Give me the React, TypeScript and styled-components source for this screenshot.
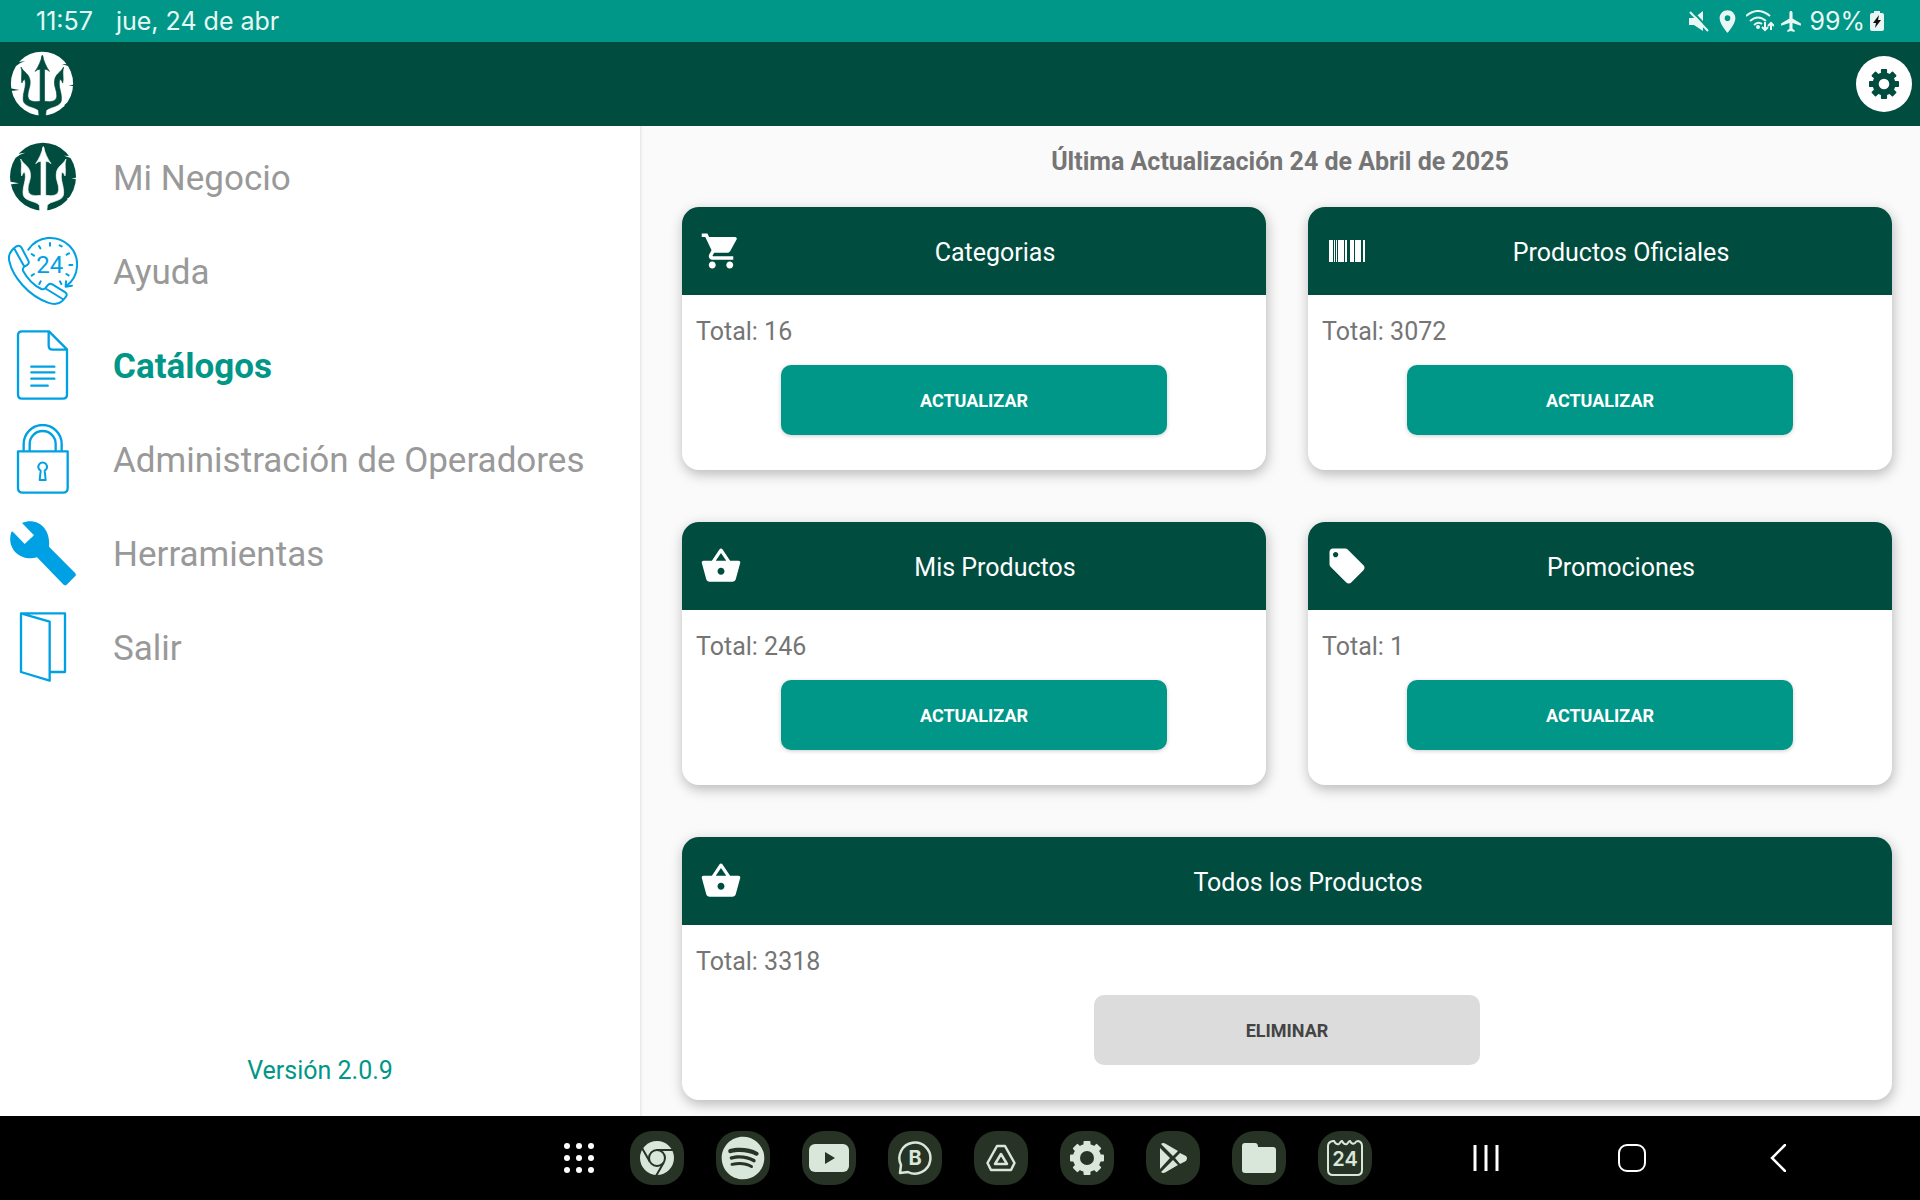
import React from 'react';
import styled, { createGlobalStyle } from 'styled-components';
import { MdShoppingCart, MdShoppingBasket, MdLocalOffer, MdLocationOn, MdFlight } from 'react-icons/md';
import { FaSpotify } from 'react-icons/fa6';

const color = {
  teal: '#009788',
  dark: '#004d40',
  sky: '#00a1e4',
  menu: '#999999',
  text: '#757575',
  tile: '#263325',
  glyph: '#d9e6da',
  status: '#e9f7f4',
};

const GlobalStyle = createGlobalStyle`
  *, *::before, *::after { box-sizing: border-box; }
  body { margin: 0; font-family: Roboto, "Liberation Sans", sans-serif; }
  button { font-family: inherit; border: 0; padding: 0; cursor: pointer; }
  h1, h2, p, ul { margin: 0; padding: 0; }
  svg { display: block; flex: none; }
`;

const Page = styled.div`
  min-height: 100vh;
  display: flex;
  flex-direction: column;
`;

const StatusBar = styled.div`
  height: 42px;
  padding: 0 36px;
  display: flex;
  align-items: center;
  justify-content: space-between;
  background: ${color.teal};
  color: ${color.status};
  font: 400 25px/42px Inter, Roboto, sans-serif;
`;

const StatusGroup = styled.div<{ $gap: number }>`
  display: flex;
  align-items: center;
  gap: ${(p) => p.$gap}px;
`;

const AppBar = styled.header`
  height: 84px;
  padding: 0 8px 0 9px;
  display: flex;
  align-items: center;
  justify-content: space-between;
  background: ${color.dark};
`;

const RoundButton = styled.button`
  width: 56px;
  height: 56px;
  border-radius: 50%;
  display: grid;
  place-items: center;
  background: #fff;
  color: ${color.dark};
`;

const Body = styled.div`
  flex: 1;
  display: grid;
  grid-template-columns: 1fr 2fr;
`;

const Sidebar = styled.nav`
  display: flex;
  flex-direction: column;
  padding: 4px 0 30px;
  background: #fff;
`;

const MenuList = styled.ul`
  list-style: none;
`;

const MenuLink = styled.a<{ $active?: boolean }>`
  height: 94px;
  padding-left: 8px;
  display: flex;
  align-items: center;
  gap: 35px;
  font-size: 35px;
  line-height: 42px;
  font-weight: ${(p) => (p.$active ? 700 : 400)};
  color: ${(p) => (p.$active ? color.teal : color.menu)};
  text-decoration: none;
`;

const MenuLabel = styled.span`
  padding-top: 4px;
`;

const Version = styled.p`
  margin-top: auto;
  text-align: center;
  font-size: 25px;
  line-height: 30px;
  color: ${color.teal};
`;

const Main = styled.main`
  padding: 21px 0 16px;
  background: #fafafa;
  box-shadow: inset 3px 0 3px -2px rgba(0, 0, 0, 0.1);
`;

const Updated = styled.h1`
  text-align: center;
  font-size: 25px;
  line-height: 30px;
  font-weight: 700;
  color: ${color.text};
`;

const Cards = styled.div`
  margin-top: 30px;
  padding: 0 28px 0 42px;
  display: grid;
  grid-template-columns: 1fr 1fr;
  gap: 52px 42px;
`;

const CardBox = styled.section<{ $wide?: boolean }>`
  grid-column: ${(p) => (p.$wide ? '1 / -1' : 'auto')};
  border-radius: 17px;
  overflow: hidden;
  background: #fff;
  box-shadow: 1px 4px 13px rgba(0, 0, 0, 0.27);
`;

const CardHead = styled.div`
  height: 88px;
  padding: 0 18px;
  display: flex;
  align-items: center;
  background: ${color.dark};
  color: #fff;
`;

const CardTitle = styled.h2`
  flex: 1;
  padding-top: 4px;
  text-align: center;
  font-size: 25px;
  line-height: 30px;
  font-weight: 400;
`;

const CardBody = styled.div`
  padding: 22px 14px 35px;
  display: flex;
  flex-direction: column;
  align-items: center;
  gap: 18px;
`;

const Total = styled.p`
  align-self: stretch;
  font-size: 25px;
  line-height: 30px;
  color: ${color.text};
`;

const Action = styled.button<{ $muted?: boolean }>`
  width: 386px;
  max-width: 100%;
  height: 70px;
  border-radius: 10px;
  font-size: 18px;
  font-weight: 700;
  background: ${(p) => (p.$muted ? '#dcdcdc' : color.teal)};
  color: ${(p) => (p.$muted ? '#444' : '#fff')};
  box-shadow: ${(p) => (p.$muted ? 'none' : '0 1px 4px rgba(0, 0, 0, 0.2)')};
`;

const NavBar = styled.footer`
  height: 84px;
  padding-right: 69px;
  display: flex;
  align-items: center;
  justify-content: flex-end;
  background: #000;
  color: #fff;
`;

const Dock = styled.div`
  display: flex;
  gap: 32px;
  margin: 0 41px 0 37px;
`;

const BareButton = styled.button<{ $width: number }>`
  width: ${(p) => p.$width}px;
  height: 54px;
  display: grid;
  place-items: center;
  background: none;
  color: #fff;
`;

const Tile = styled.button`
  width: 54px;
  height: 54px;
  border-radius: 22px;
  display: grid;
  place-items: center;
  background: ${color.tile};
  color: ${color.glyph};
`;

function Trident({ size, fill, ground }: { size: number; fill: string; ground: string }) {
  const half =
    'M132 54 L130 50 C125 68 118 86 107 101 Q114 94 123 94 L123 196 Q85 202 84 180 C83 160 94 150 91 130 C88 108 73 106 62 87 C68 106 61 120 65 138 Q68 128 74 126 C82 150 65 170 70 196 C74 214 112 214 118 226 L120 248 L132 248 Z';
  return (
    <svg width={size} height={size} viewBox="24 36 210 210" aria-hidden="true">
      <ellipse cx="129" cy="140" rx="99" ry="102" fill={fill} />
      <g fill={ground}>
        <path d={half} stroke={ground} strokeWidth="2" />
        <path d={half} stroke={ground} strokeWidth="2" transform="matrix(-1 0 0 1 260 0)" />
        <path d="M24 154 L57 160 L24 164 Z M50 72 L76 68 L60 74 L46 84 Z M192 77 L216 78 L212 84 Z M240 142 L214 145 L240 150 Z M218 198 L200 206 L214 210 Z" />
      </g>
    </svg>
  );
}

function Line({ box, children, width = 7 }: { box: string; children: React.ReactNode; width?: number }) {
  return (
    <svg width="70" height="70" viewBox={box} fill="none" stroke={color.sky} strokeWidth={width} strokeLinecap="round" strokeLinejoin="round" aria-hidden="true">
      {children}
    </svg>
  );
}

const HelpIcon = () => (
  <Line box="24 318 210 210" width={6}>
    <path d="M85 359 A80 80 0 1 1 199 468 M198 454 L197 470 L216 467" />
    <path d="M150 339 V347 M179 346 L185 349 M200 374 L207 370 M208 405 H217 M199 432 L206 436 M180 454 L184 462 M122 454 L118 462 M102 432 L95 437 M102 377 L95 372 M121 355 L117 348" />
    <path d="M49 349 C30 362 24 378 28 394 C38 440 84 496 144 518 C164 525 178 522 188 512 L198 500 Q203 492 196 487 L157 463 Q149 458 142 467 Q134 480 124 477 C102 466 82 446 69 422 Q66 414 76 408 Q90 402 85 392 L64 352 Q58 344 49 349 Z M44 358 L72 408 M139 477 L188 507" />
    <text x="149" y="428" textAnchor="middle" fontFamily="Roboto, sans-serif" fontSize="72" fontWeight="400" fill={color.sky} stroke="none">24</text>
  </Line>
);

const DocIcon = () => (
  <Line box="24 600 210 210">
    <path d="M66 604 H147 L201 658 V793 Q201 806 189 806 H66 Q54 806 54 793 V616 Q54 604 66 604 Z M146 605 V646 Q146 659 158 659 H200 M94 710 H163 M94 727 H163 M94 746 H163 M94 767 H143" />
  </Line>
);

const LockIcon = () => (
  <Line box="24 42 210 210">
    <path d="M54 124 H203 V234 Q203 248 189 248 H68 Q54 248 54 234 Z" />
    <path d="M71 122 V102 A57 57 0 0 1 185 102 V122 M89 122 V102 A39 39 0 0 1 167 102 V122" />
    <path d="M122 182 A13 13 0 1 1 134 182 L137 210 H119 Z" strokeWidth="6" />
  </Line>
);

const WrenchIcon = () => (
  <svg width="70" height="70" viewBox="24 324 210 210" fill={color.sky} aria-hidden="true">
    <path d="M66 339 C108 321 153 352 147 410 L226 490 Q229 494 226 498 L200 524 Q196 528 191 524 L111 442 C60 456 18 414 34 366 Q36 363 40 367 L74 402 L102 376 Z" />
  </svg>
);

const DoorIcon = () => (
  <Line box="24 606 210 210">
    <path d="M63 610 H195 V786 H151 M63 610 L149 635 V812 L63 786 Z" />
  </Line>
);

const BarcodeIcon = () => (
  <svg width="42" height="42" viewBox="0 0 42 42" fill="currentColor" aria-hidden="true">
    <path d="M3 10h4v22H3z M8 10h1v22H8z M10 10h1v22h-1z M12 10h6v22h-6z M19 10h2v22h-2z M24 10h4v22h-4z M29 10h6v22h-6z M37 10h2v22h-2z" />
  </svg>
);

function Gear({ size, body, hole, tooth, fill, ground }: { size: number; body: number; hole: number; tooth: number; fill: string; ground: string }) {
  return (
    <svg width={size} height={size} viewBox="-17 -17 34 34" fill={fill} aria-hidden="true">
      <circle r={body} />
      {[0, 45, 90, 135].map((a) => (
        <rect key={a} x={-tooth / 2} y={-17} width={tooth} height={34} rx={1} transform={`rotate(${a})`} />
      ))}
      <circle r={hole} fill={ground} />
    </svg>
  );
}

const MuteIcon = () => (
  <svg width="20" height="22" viewBox="0 0 20 22" aria-hidden="true">
    <path d="M0 8 H5 L14 1 V21 L5 15 H0 Z" fill={color.status} />
    <path d="M3 1 L20 19" stroke={color.teal} strokeWidth="2" />
    <path d="M1 2 L19 21" stroke={color.status} strokeWidth="2" />
  </svg>
);

const WifiIcon = () => (
  <svg width="28" height="22" viewBox="0 0 28 22" fill="none" stroke={color.status} strokeWidth="2" aria-hidden="true">
    <path d="M0 6 Q12 -4 24 6 M4 11 Q12 4 20 11 M8 15 Q12 11 16 14" />
    <circle cx="12" cy="17" r="1" fill={color.status} />
    <path d="M19 12 V20 M16 17 L19 20 L22 17 M25 20 V13 M22 16 L25 13 L28 16" strokeWidth="2" />
  </svg>
);

const BatteryIcon = () => (
  <svg width="14" height="20" viewBox="0 0 14 20" aria-hidden="true">
    <path d="M4 0 H10 V2 H12 Q14 2 14 4 V18 Q14 20 12 20 H2 Q0 20 0 18 V4 Q0 2 2 2 H4 Z" fill={color.status} />
    <path d="M9 4 L3 12 H6 L5 17 L11 9 H8 Z" fill="#111" />
  </svg>
);

const ChromeIcon = () => (
  <svg width="34" height="34" viewBox="0 0 34 34" aria-hidden="true">
    <circle cx="17" cy="17" r="17" fill={color.glyph} />
    <g stroke={color.tile} strokeWidth="2" fill="none">
      <path d="M17 9 H33 M10 21 L2 7 M24 21 L16 35" />
      <circle cx="17" cy="17" r="8" fill={color.glyph} />
    </g>
  </svg>
);

const YoutubeIcon = () => (
  <svg width="40" height="28" viewBox="0 0 40 28" aria-hidden="true">
    <rect width="40" height="28" rx="6" fill={color.glyph} />
    <path d="M16 8 L26 14 L16 20 Z" fill={color.tile} />
  </svg>
);

const BusinessIcon = () => (
  <svg width="34" height="34" viewBox="0 0 34 34" aria-hidden="true">
    <path d="M3 24 A15.500 15.500 0 1 1 10 31 L2 32 Z" fill="none" stroke={color.glyph} strokeWidth="2.500" strokeLinejoin="round" />
    <text x="17" y="24" textAnchor="middle" fontFamily="Inter, sans-serif" fontSize="20" fontWeight="700" fill={color.glyph}>B</text>
  </svg>
);

const DriveIcon = () => (
  <svg width="30" height="28" viewBox="0 0 30 28" fill="none" stroke={color.glyph} strokeWidth="2.500" strokeLinejoin="round" aria-hidden="true">
    <path d="M11 2 H19 L28.500 19 L25 26 H5 L1.500 19 Z M15 10 L21 20 H9 Z" />
  </svg>
);

const PlayIcon = () => (
  <svg width="30" height="32" viewBox="0 0 30 32" fill={color.glyph} aria-hidden="true">
    <path d="M2 6 L12 16 L2 27 Z M3 2 Q5 0 8 2 L20 9 L15 14 Z M3 30 Q5 32 8 30 L20 23 L15 18 Z M17 16 L22 11 L28 14 Q30 16 28 19 L22 22 Z" />
  </svg>
);

const FolderIcon = () => (
  <svg width="34" height="32" viewBox="0 0 34 32" fill={color.glyph} aria-hidden="true">
    <path d="M3 1 H13 Q16 1 16 5 H31 Q34 5 34 8 V28 Q34 31 31 31 H3 Q0 31 0 28 V4 Q0 1 3 1 Z" />
  </svg>
);

const CalendarIcon = () => (
  <svg width="36" height="36" viewBox="0 0 36 36" aria-hidden="true">
    <path d="M6 1 H7 Q9 5 12 4 Q14 1 15 1 Q17 5 20 4 Q22 1 23 1 Q25 5 28 3 Q29 1 31 1 Q35 2 35 6 V30 Q35 35 30 35 H6 Q1 35 1 30 V6 Q1 2 6 1 Z" fill="none" stroke={color.glyph} strokeWidth="2" />
    <text x="18" y="26" textAnchor="middle" fontFamily="Inter, sans-serif" fontSize="20" fontWeight="600" fill={color.glyph}>24</text>
  </svg>
);

const menu = [
  { label: 'Mi Negocio', icon: <Trident size={70} fill={color.dark} ground="#fff" /> },
  { label: 'Ayuda', icon: <HelpIcon /> },
  { label: 'Catálogos', icon: <DocIcon />, active: true },
  { label: 'Administración de Operadores', icon: <LockIcon /> },
  { label: 'Herramientas', icon: <WrenchIcon /> },
  { label: 'Salir', icon: <DoorIcon /> },
];

const cards = [
  { title: 'Categorias', total: 16, icon: <MdShoppingCart size={42} /> },
  { title: 'Productos Oficiales', total: 3072, icon: <BarcodeIcon /> },
  { title: 'Mis Productos', total: 246, icon: <MdShoppingBasket size={42} /> },
  { title: 'Promociones', total: 1, icon: <MdLocalOffer size={42} /> },
  { title: 'Todos los Productos', total: 3318, icon: <MdShoppingBasket size={42} />, wide: true },
];

const apps = [
  { name: 'Chrome', icon: <ChromeIcon /> },
  { name: 'Spotify', icon: <FaSpotify size={44} /> },
  { name: 'YouTube', icon: <YoutubeIcon /> },
  { name: 'WhatsApp Business', icon: <BusinessIcon /> },
  { name: 'Drive', icon: <DriveIcon /> },
  { name: 'Ajustes', icon: <Gear size={34} body={14} hole={7} tooth={7} fill={color.glyph} ground={color.tile} /> },
  { name: 'Play Store', icon: <PlayIcon /> },
  { name: 'Mis archivos', icon: <FolderIcon /> },
  { name: 'Calendario', icon: <CalendarIcon /> },
];

export default function App() {
  return (
    <Page>
      <GlobalStyle />
      <StatusBar>
        <StatusGroup $gap={23}>
          <span>11:57</span>
          <span>jue, 24 de abr</span>
        </StatusGroup>
        <StatusGroup $gap={5}>
          <MuteIcon />
          <MdLocationOn size={27} />
          <WifiIcon />
          <MdFlight size={25} />
          <span>99%</span>
          <BatteryIcon />
        </StatusGroup>
      </StatusBar>
      <AppBar>
        <Trident size={66} fill="#fff" ground={color.dark} />
        <RoundButton aria-label="Configuración">
          <Gear size={30} body={13} hole={6} tooth={7} fill={color.dark} ground="#fff" />
        </RoundButton>
      </AppBar>
      <Body>
        <Sidebar>
          <MenuList>
            {menu.map((m) => (
              <li key={m.label}>
                <MenuLink href="#" $active={m.active} aria-current={m.active ? 'page' : undefined}>
                  {m.icon}
                  <MenuLabel>{m.label}</MenuLabel>
                </MenuLink>
              </li>
            ))}
          </MenuList>
          <Version>Versión 2.0.9</Version>
        </Sidebar>
        <Main>
          <Updated>Última Actualización 24 de Abril de 2025</Updated>
          <Cards>
            {cards.map((c) => (
              <CardBox key={c.title} $wide={c.wide}>
                <CardHead>
                  {c.icon}
                  <CardTitle>{c.title}</CardTitle>
                </CardHead>
                <CardBody>
                  <Total>Total: {c.total}</Total>
                  <Action $muted={c.wide}>{c.wide ? 'ELIMINAR' : 'ACTUALIZAR'}</Action>
                </CardBody>
              </CardBox>
            ))}
          </Cards>
        </Main>
      </Body>
      <NavBar>
        <BareButton $width={29} aria-label="Aplicaciones">
          <svg width="30" height="30" viewBox="0 0 30 30" fill="currentColor">
            {[3, 15, 27].map((y) => [3, 15, 27].map((x) => <circle key={`${x}-${y}`} cx={x} cy={y} r="3" />))}
          </svg>
        </BareButton>
        <Dock>
          {apps.map((a) => (
            <Tile key={a.name} aria-label={a.name}>
              {a.icon}
            </Tile>
          ))}
        </Dock>
        <BareButton $width={146} aria-label="Recientes">
          <svg width="26" height="28" viewBox="0 0 26 28" stroke="currentColor" strokeWidth="3">
            <path d="M2 1 V27 M13 1 V27 M24 1 V27" />
          </svg>
        </BareButton>
        <BareButton $width={146} aria-label="Inicio">
          <svg width="28" height="28" viewBox="0 0 28 28" fill="none" stroke="currentColor" strokeWidth="2">
            <rect x="1" y="1" width="26" height="26" rx="8" />
          </svg>
        </BareButton>
        <BareButton $width={146} aria-label="Atrás">
          <svg width="16" height="28" viewBox="0 0 16 28" fill="none" stroke="currentColor" strokeWidth="2.500" strokeLinecap="round">
            <path d="M15 1 L2 14 L15 27" />
          </svg>
        </BareButton>
      </NavBar>
    </Page>
  );
}
